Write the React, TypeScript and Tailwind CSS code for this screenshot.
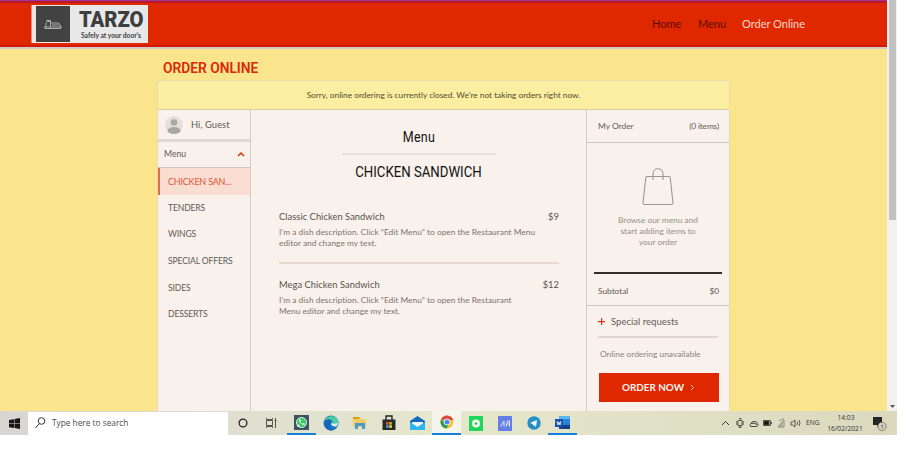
import React from 'react';

const lato = "font-['Lato',sans-serif]";
const din = "font-['Roboto',sans-serif]";
const segoe = "font-['Open_Sans',sans-serif]";

function Header() {
  return (
    <header className="flex h-[49px] w-[887px] items-start border-t border-b-2 border-t-[#a4309c] border-b-[#cdcbc8] bg-[#df2800]">
      <div className="flex h-[46px] w-full items-start border-t-2 border-b-2 border-t-[#b91a24] border-b-[#d41a02] pl-[31px]">
        <div className="mt-[2px] flex h-[38px] w-[117px] items-center border-l border-[#ee8a78] bg-[#e8e8e8]">
          <div className="ml-[4px] flex h-[36px] w-[34px] items-center justify-center bg-[#424242]">
            <svg width="20" height="12" viewBox="0 0 20 12" fill="none" stroke="#b8b8b8" strokeWidth="0.9">
              <path d="M2 10.500h15.500l1-1.500H1zM3 9V5l1.500-1.500h3V9M8 5h7l2.500 2v2M3 2.500h5M9 7h7" />
            </svg>
          </div>
          <div className="ml-[9px] w-[65px] text-[#3e3e3e]">
            <div className={`${din} w-max origin-left scale-x-[0.94] text-[21.500px] leading-[20px] font-black`}>TARZO</div>
            <div className={`${lato} mt-[1px] ml-[2px] text-[6.700px] leading-[8px] font-bold whitespace-nowrap`}>Safely at your door's</div>
          </div>
        </div>
        <nav className={`${lato} mt-[13px] ml-[504px] flex whitespace-nowrap text-[11px] leading-[16px] text-[#5d0b00]`}>
          <span className="w-[46px]">Home</span>
          <span className="w-[44px]">Menu</span>
          <span className="text-[#ffd9ce]">Order Online</span>
        </nav>
      </div>
    </header>
  );
}

const categories = ['TENDERS', 'WINGS', 'SPECIAL OFFERS', 'SIDES', 'DESSERTS'];

function Sidebar() {
  return (
    <aside className={`${lato} w-[93px] shrink-0 border-r border-[#d3cbc7] text-[#625c58]`}>
      <div className="flex h-[32px] items-center border-b-3 border-[#dfd7d3] pl-[7px]">
        <svg width="18" height="20" viewBox="0 0 18 20">
          <circle cx="9" cy="10" r="9" fill="#e5dfda" />
          <circle cx="9" cy="7.500" r="3.300" fill="#aaa6a1" />
          <ellipse cx="9" cy="15.500" rx="6.500" ry="3.600" fill="#aaa6a1" />
        </svg>
        <span className="mt-px ml-[8px] text-[9.300px] tracking-[0.080px]">Hi, Guest</span>
      </div>
      <div className="flex h-[26px] items-center justify-between border-b border-[#cfc5c0] pr-[5px] pb-[2px] pl-[6px] text-[8.700px]">
        <span>Menu</span>
        <svg width="8" height="6" viewBox="0 0 8 6" fill="none" stroke="#df3211" strokeWidth="1.500"><path d="M1 5l3-3 3 3" /></svg>
      </div>
      <div className="flex h-[27px] items-center border-l-2 border-[#e66851] bg-[#f9ddd1] pl-[8px] text-[9px] tracking-[-0.200px] whitespace-nowrap text-[#e3563a]">CHICKEN SAN...</div>
      <div className="grid auto-rows-[26.6px] items-center pl-[10px] text-[8.600px] tracking-[-0.150px] whitespace-nowrap">
        {categories.map((c) => <span key={c}>{c}</span>)}
      </div>
    </aside>
  );
}

function Dish({ name, price, lines }: { name: string; price: string; lines: string[] }) {
  return (
    <article>
      <div className="flex justify-between text-[9.300px] leading-[14px] tracking-[0.060px] text-[#57514d]">
        <span>{name}</span><span>{price}</span>
      </div>
      <p className="mt-[3px] text-[8.300px] leading-[11px] tracking-[0.040px] whitespace-nowrap text-[#7b746f]">
        {lines[0]}<br />{lines[1]}
      </p>
    </article>
  );
}

function MenuPanel() {
  return (
    <main className="flex w-[336px] shrink-0 flex-col border-r border-[#d3cbc7] px-[28px]">
      <div className={`${din} flex flex-col items-center text-[14.500px] text-[#111]`}>
        <h2 className="mt-[18px] h-[20px] scale-x-[0.86] leading-[20px] tracking-[0.400px]">Menu</h2>
        <div className="mt-[5px] h-[2px] w-[154px] bg-[#e6deda]" />
        <h3 className="mt-[8px] h-[20px] scale-x-[0.91] leading-[20px] whitespace-nowrap">CHICKEN SANDWICH</h3>
      </div>
      <div className={`${lato} mt-[27px] w-[280px]`}>
        <Dish name="Classic Chicken Sandwich" price="$9" lines={['I’m a dish description. Click “Edit Menu” to open the Restaurant Menu', 'editor and change my text.']} />
        <div className="mt-[12.500px] mb-[14px] h-[2px] bg-[#e5dacf]" />
        <Dish name="Mega Chicken Sandwich" price="$12" lines={['I’m a dish description. Click “Edit Menu” to open the Restaurant', 'Menu editor and change my text.']} />
      </div>
    </main>
  );
}

function OrderPanel() {
  return (
    <aside className={`${lato} flex w-[142px] shrink-0 flex-col text-[#625c58]`}>
      <div className="flex h-[33px] items-center justify-between border-b border-[#cec6c2] pr-[10px] pl-[11px] text-[8.400px]">
        <span>My Order</span><span className="tracking-[-0.150px]">(0 items)</span>
      </div>
      <div className="flex h-[129px] flex-col items-center pt-[23px]">
        <svg width="34" height="40" viewBox="0 0 34 40" fill="none" stroke="#9b9894" strokeWidth="1.100">
          <path d="M6 10.500h22q1 0 1.200 1l2.800 25.500q0 1.500-1.500 1.500h-27q-1.500 0-1.500-1.500L4.800 11.500q.2-1 1.200-1zM12 14V8c0-7 10-7 10 0v6" />
        </svg>
        <p className="mt-[9px] text-center text-[8.400px] leading-[11px] tracking-[-0.020px] text-[#969089]">Browse our menu and<br />start adding items to<br />your order</p>
      </div>
      <div className="mr-[7px] ml-[7px] h-[2px] bg-[#33302e]" />
      <div className="flex h-[32px] items-center justify-between border-b border-[#cec6c2] pt-[4px] pr-[10px] pl-[11px] text-[8.300px]"><span>Subtotal</span><span>$0</span></div>
      <div className="mx-[11px] flex h-[32px] items-center border-b-2 border-[#dfd5d1] text-[9.500px]">
        <svg className="shrink-0" width="7" height="7" viewBox="0 0 7 7"><path d="M3 0h1.200v3H7v1.200H4.200V7H3V4.200H0V3h3z" fill="#df3211" /></svg>
        <span className="mt-[2px] ml-[6px] tracking-[0.020px]">Special requests</span>
      </div>
      <p className="mt-[9px] ml-[13px] h-[14px] text-[8.400px] leading-[14px] text-[#8a837e]">Online ordering unavailable</p>
      <button className="mt-[12px] ml-[11.500px] flex h-[29px] w-[120px] items-center justify-center bg-[#df2800] text-[9.900px] font-bold whitespace-nowrap text-[#fff4f0]">
        ORDER NOW
        <svg className="ml-[6px]" width="5" height="7" viewBox="0 0 5 7" fill="none" stroke="#fbd0c6"><path d="M1 1l2.500 2.500L1 6" /></svg>
      </button>
    </aside>
  );
}

function TrayIcons() {
  return (
    <svg className="shrink-0" width="82" height="16" viewBox="0 0 82 16" fill="none" stroke="#4a4a44" strokeWidth="0.9">
      <path d="M1 10l3.500-3.500L8 10" stroke="#222" />
      <path d="M17 5.500v5h4v-5zM18 3.500h2v2M18 10.500v2h2v-2M15.800 6v4M22.200 6v4" />
      <path d="M29.500 11.500h6.500q2-1 .5-3-1-2.500-3.500-2-2.500 0-3 2-2 1-.5 3zM30 8.500q3-1 6 1" strokeWidth="1" />
      <path d="M42.500 5.500h7v5h-7zM50.500 7v2" /><path d="M43 6h5v4h-5z" fill="#151512" />
      <path d="M57 12l6-7v7zM59 12V9.500M61 12V7M58 6q2-2 5-2" stroke="#85857a" />
      <path d="M70 7h1.500L74 5v7l-2.500-2H70zM76 6.500q1 1.500 0 3.500M78 5q2 3 0 6" />
    </svg>
  );
}

function AppIcons() {
  const slot = 'flex h-[24px] w-[29px] items-center justify-center';
  return (
    <div className="flex">
      <div className={`${slot} border-b-2 border-[#1680d8]`}>
        <svg width="15" height="15" viewBox="0 0 15 15"><path d="M0 0h15v15H0z" fill="#405361" /><circle cx="7.500" cy="7.500" r="5" fill="#38c764" stroke="#e6f6ea" /><path d="M3 12l1-3 2 2zM5 5q0 4 5 5l1-1-2-1-1 1-2-2 1-1-1-2z" fill="white" /></svg>
      </div>
      <div className={slot}>
        <svg width="16" height="16" viewBox="0 0 16 16"><circle cx="8" cy="8" r="7.500" fill="#167ac4" /><path d="M1 6C3 0 15-1 15.500 7c0 4-6 4-5.500 1C9 4 3 4 1 6z" fill="#4bcca4" /><path d="M1 7c3-4 8-3 8 0-4 1-3 6 2 8C5 17 1 12 1 7z" fill="#1367b7" /><path d="M9 7q-2 3 1 4 3 1 4 0l1-3-5 1z" fill="#e3edf0" /></svg>
      </div>
      <div className={slot}>
        <svg width="13" height="14" viewBox="0 0 13 14"><path d="M0 1h6l1 2h6v8H0z" fill="#f6ce66" /><path d="M0 1h6l1 2H0z" fill="#d99a16" /><path d="M2 7h10v6h-3v-3H5v3H2z" fill="#4b9ccc" /></svg>
      </div>
      <div className={slot}>
        <svg width="14" height="16" viewBox="0 0 14 16"><path d="M4 5V1h6v4" fill="none" stroke="#222" strokeWidth="1.400" /><path d="M.5 4.500h13V15H.5z" fill="#292929" /><path d="M4 7h2.700v2.700H4z" fill="#ed4a25" /><path d="M7.200 7h2.700v2.700H7.200z" fill="#8cc43e" /><path d="M4 10.200h2.700v2.700H4z" fill="#28a4e1" /><path d="M7.200 10.200h2.700v2.700H7.200z" fill="#ffc52d" /></svg>
      </div>
      <div className={slot}>
        <svg width="15" height="15" viewBox="0 0 15 15"><path d="M0 5l7.500-5L15 5v9H0z" fill="#146bb8" /><path d="M2 6h11v3l-5 3-6-3z" fill="#edf8fd" /><path d="M0 6l7.500 5L15 6v8H0z" fill="#2fb5ed" /></svg>
      </div>
      <div className={`${slot} border-b-2 border-[#1680d8] bg-[#f5f5ee]`}>
        <svg width="14" height="14" viewBox="0 0 14 14"><circle cx="7" cy="7" r="6.500" fill="#f4c634" /><path d="M7 7L1.200 4A6.500 6.500 0 0 1 13.200 5H7z" fill="#df4c3d" /><path d="M1.200 4A6.500 6.500 0 0 0 6.500 13.500L9 8.500H5z" fill="#299c55" /><circle cx="7" cy="7" r="3.200" fill="#fff" /><circle cx="7" cy="7" r="2.500" fill="#4c87eb" /></svg>
      </div>
      <div className={slot}>
        <svg width="14" height="15" viewBox="0 0 14 15"><path d="M0 0h14v15H0z" fill="#22d65c" /><circle cx="7" cy="7.500" r="4" fill="#edfbef" /><circle cx="7" cy="7.500" r="1.300" fill="#22c653" /></svg>
      </div>
      <div className={slot}>
        <svg width="14" height="15" viewBox="0 0 14 15"><path d="M0 0h14v15H0z" fill="#647fe5" /><path d="M2.500 10.500L6 5v5.500M8 10.500L9.500 5M11.500 5v5.500M9 8h2.500M9.500 5h2" fill="none" stroke="#e4eaff" /></svg>
      </div>
      <div className={slot}>
        <svg width="14" height="14" viewBox="0 0 14 14"><circle cx="7" cy="7" r="6.700" fill="#238fc6" /><path d="M3 7l7-3-1 7-2-2-1 1V8z" fill="white" /></svg>
      </div>
      <div className={`${slot} border-b-2 border-[#1680d8]`}>
        <svg width="15" height="15" viewBox="0 0 15 15"><path d="M4 1h11v13H4z" fill="#2a83d4" /><path d="M4 1h11v3H4z" fill="#55b8ee" /><path d="M4 10h11v4H4z" fill="#173f87" /><path d="M0 4h8v8H0z" fill="#1a55ad" /><path d="M2 6l1 4 1-3 1 3 1-4" fill="none" stroke="white" strokeWidth=".8" /></svg>
      </div>
    </div>
  );
}

function Taskbar() {
  return (
    <footer className={`${segoe} flex h-[24px] w-[897px] items-center overflow-hidden bg-linear-to-r from-[#d9d5d3] via-[#e5e7cd] to-[#dbd9bd]`}>
      <div className="flex w-[28px] shrink-0 justify-center">
        <svg width="11" height="11" viewBox="0 0 11 11" fill="#171717"><path d="M0 2l5-.8v4H0zM5.500 1L11 0v5.200H5.500zM0 5.800h5V10l-5-.8zM5.500 5.800H11V11l-5.500-1z" /></svg>
      </div>
      <div className="flex h-[23px] w-[200px] shrink-0 items-center bg-white pl-[7px] text-[8.300px] text-[#4c4c4c]">
        <svg width="11" height="12" viewBox="0 0 11 12" fill="none" stroke="#333"><circle cx="6.500" cy="4" r="3.300" /><path d="M4 7L.5 11" /></svg>
        <span className="mt-px ml-[6px] whitespace-nowrap">Type here to search</span>
      </div>
      <svg className="ml-[10px] shrink-0" width="10" height="12" viewBox="0 0 10 12"><circle cx="5" cy="6" r="3.900" fill="none" stroke="#252525" strokeWidth="1.300" /></svg>
      <svg className="mr-[10px] ml-[17px] shrink-0" width="12" height="12" viewBox="0 0 12 12" fill="none" stroke="#555"><path d="M1.500 3.500h6v5h-6zM1.500 1v1.500h6V1M1.500 11V9.500h6V11M10.500 1v10M9.500 3.500h2" /></svg>
      <AppIcons />
      <div className="ml-[144px] flex shrink-0 items-center">
        <TrayIcons />
        <span className="ml-[3px] w-[20px] text-[6.600px] text-[#333]">ENG</span>
        <div className="w-[38px] text-center text-[6.700px] leading-[11px] whitespace-nowrap text-[#333]"><span className="mr-[-2px]">14:03</span><br />16/02/2021</div>
        <svg className="ml-[8px]" width="16" height="18" viewBox="0 0 16 18"><path d="M1 3h9v8H7l-2 2v-2H1z" fill="#252525" /><circle cx="10" cy="12.500" r="4.200" fill="#d1cec0" stroke="#77756b" strokeWidth=".8" /><text x="8.500" y="15" fontSize="6" fontFamily="Open Sans" fill="#333">1</text></svg>
      </div>
    </footer>
  );
}

export default function App() {
  return (
    <div className="h-[450px] w-[908px] overflow-hidden bg-white">
      <div className="flex h-[411px] w-[897px]">
        <div className="flex h-full w-[887px] flex-col bg-[#fae58d]">
          <Header />
          <h1 className={`${din} mt-[10px] ml-[163px] h-[21px] w-max origin-left scale-x-[0.95] text-[14.500px] leading-[19px] font-semibold text-[#dc2607]`}>ORDER ONLINE</h1>
          <section className="ml-[157px] flex min-h-0 w-[573px] flex-1 flex-col border-x border-t border-[#e9dcae] bg-[#f9f1eb]">
            <div className={`${lato} flex h-[29px] shrink-0 items-center justify-center border-b border-[#d8cf9f] bg-[#fbeea0] text-[8.300px] whitespace-nowrap text-[#514d33]`}>Sorry, online ordering is currently closed. We're not taking orders right now.</div>
            <div className="flex min-h-0 flex-1 overflow-hidden"><Sidebar /><MenuPanel /><OrderPanel /></div>
          </section>
        </div>
        <div className="flex h-full w-[10px] flex-col items-center justify-between bg-[#f1f1f1]">
          <div className="h-[220px] w-[7px] bg-[#c1c1c1]" />
          <svg className="mb-[2px]" width="5" height="5" viewBox="0 0 5 5"><path d="M0 1h5L2.500 4z" fill="#555" /></svg>
        </div>
      </div>
      <Taskbar />
    </div>
  );
}
